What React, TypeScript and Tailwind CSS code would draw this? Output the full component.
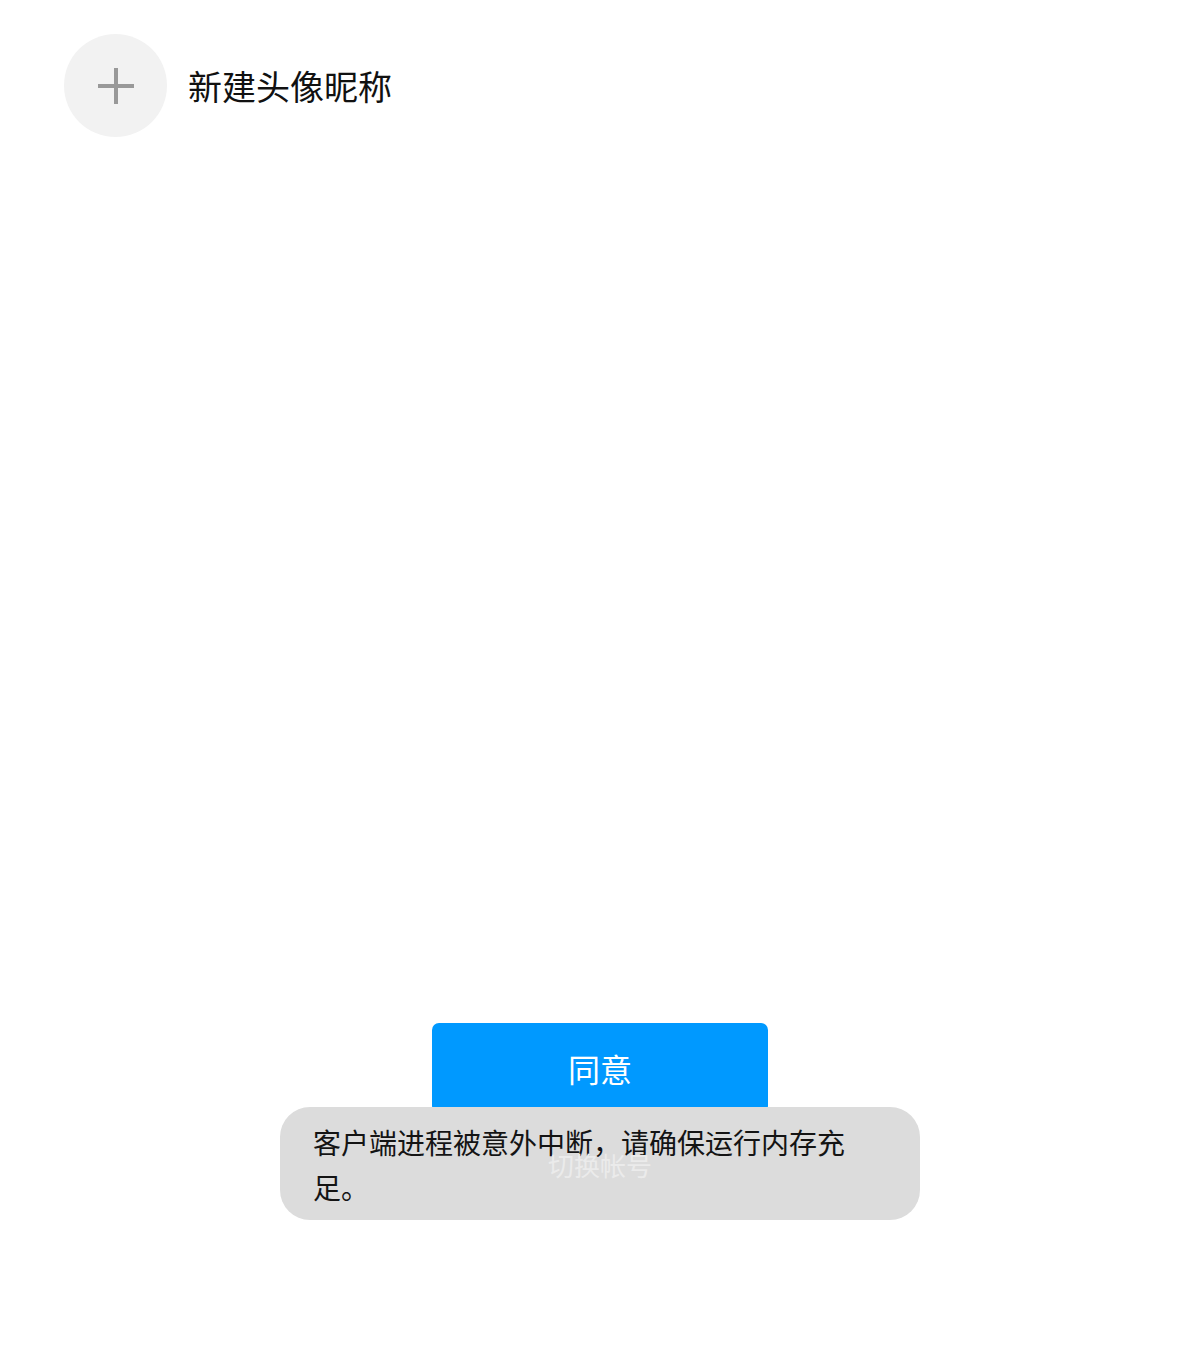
import React from 'react';

const font = { fontFamily: '"Noto Sans CJK SC", "Noto Sans", sans-serif' };

const PlusIcon: React.FC = () => (
  <svg width="36" height="36" viewBox="0 0 36 36" aria-hidden="true">
    <rect x="0" y="16" width="36" height="4" fill="#999999" />
    <rect x="16" y="0" width="4" height="36" fill="#999999" />
  </svg>
);

const App: React.FC = () => {
  return (
    <div
      className="relative w-[1200px] h-[1349px] bg-white overflow-hidden"
      style={font}
    >
      {/* New avatar row */}
      <div className="flex items-center gap-[21px] pl-[64px] pt-[34px]">
        <div className="flex items-center justify-center w-[103px] h-[103px] rounded-full bg-[#f2f2f2]">
          <PlusIcon />
        </div>
        <span className="text-[34px] leading-none text-[#111111]">新建头像昵称</span>
      </div>

      {/* Bottom actions */}
      <div className="flex flex-col items-center mt-[886px]">
        <button className="w-[336px] h-[90px] rounded-[7px] bg-[#0099ff] text-white text-[32px] leading-none">
          同意
        </button>
        <span className="relative z-20 mt-[32px] text-[26px] leading-[40px] text-[#ebebeb]">
          切换帐号
        </span>
      </div>

      {/* Toast */}
      <div className="absolute z-10 left-[280px] top-[1107px] w-[640px] h-[113px] rounded-[30px] bg-[#dcdcdc] pl-[33px] pr-[60px] pt-[13px] text-[28px] leading-[45px] text-[#141414]">
        客户端进程被意外中断，请确保运行内存充足。
      </div>
    </div>
  );
};

export default App;
